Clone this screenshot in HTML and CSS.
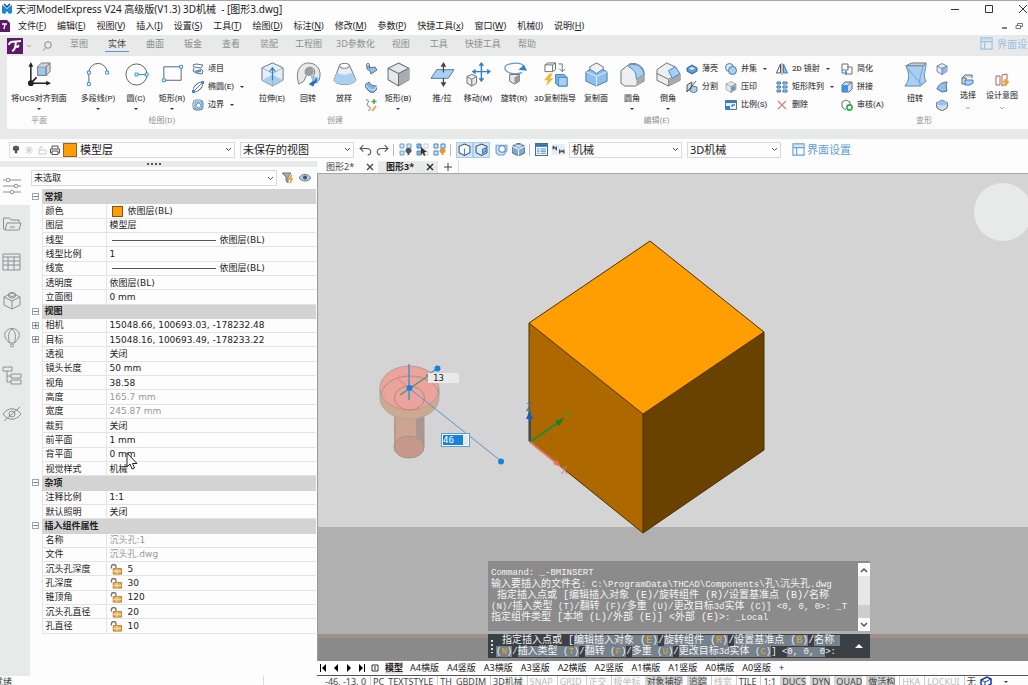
FILE: index.html
```html
<!DOCTYPE html>
<html lang="zh-CN">
<head>
<meta charset="utf-8">
<title>天河ModelExpress V24 - [图形3.dwg]</title>
<link rel="stylesheet" href="styles.css">
</head>
<body>
<svg class="defs" aria-hidden="true">
  <symbol id="cube" viewBox="0 0 24 24"><path d="M12 1 22 6v11l-10 6L2 17V6z" fill="#e6e8ea" stroke="#6b7076"/><path d="M12 11v12l10-6V6z" fill="#a9adb1"/><path d="M2 6l10 5 10-5M12 11v12" fill="none" stroke="#6b7076"/></symbol>
  <symbol id="bluecube" viewBox="0 0 24 24"><path d="M12 1 22 6v11l-10 6L2 17V6z" fill="#dcebf8" stroke="#5f6a75" stroke-width="1.5"/><path d="M12 11v12l10-6V6z" fill="#8fbce8"/><path d="M2 6l10 5 10-5M12 11v12" fill="none" stroke="#5f6a75" stroke-width="1.5"/></symbol>
  <symbol id="lock" viewBox="0 0 12 12"><path d="M1 5V3a2.500 2.500 0 0 1 5 0v2" fill="none" stroke="#777" stroke-width="1.500"/><path d="M3 5h9v6H3z" fill="#e8b25c" stroke="#b5772a"/><path d="M7 5v6M3 8h9" stroke="#fbe3b0"/></symbol>
  <symbol id="layout" viewBox="0 0 14 14"><path d="M1 1h12v12H1zM1 5h12M5 5v8" fill="none" stroke="currentColor" stroke-width="1.200"/><path d="M2 3h10" stroke="currentColor" stroke-dasharray="1 1"/></symbol>
  <symbol id="cross" viewBox="0 0 8 8"><path d="M1 1l6 6M7 1 1 7" fill="none" stroke="currentColor" stroke-width="1.300"/></symbol>
</svg>

<header class="titlebar">
  <svg class="app" viewBox="0 0 12 12"><path d="M1 2l3 2 2 2 2-2 3-2v8l-3 1-2-3-2 3-3-1z" fill="#1689d8"/><path d="M3 1l3 3 3-3" fill="none" stroke="#1b3f73" stroke-width="1.500"/></svg>
  <h1>天河ModelExpress V24 高级版(V1.3) 3D机械&nbsp; - [图形3.dwg]</h1>
  <div class="wincontrols">
    <button aria-label="最小化"><svg viewBox="0 0 10 10"><path d="M1 5.500h8" stroke="#333"/></svg></button>
    <button aria-label="最大化"><svg viewBox="0 0 10 10"><path d="M1.500 1.500h7v7h-7z" fill="none" stroke="#333"/></svg></button>
    <button aria-label="关闭"><svg viewBox="0 0 10 10"><path d="M1 1l8 8M9 1 1 9" stroke="#333"/></svg></button>
  </div>
</header>

<nav class="menubar">
  <svg class="doc" viewBox="0 0 10 12"><path d="M0 0h7l3 3v9H0z" fill="#5c1a66"/><path d="M2 4h5M5 4 4 9" stroke="#fff" stroke-width="1.300"/></svg>
  <button>文件(<u>F</u>)</button><button>编辑(<u>E</u>)</button><button>视图(<u>V</u>)</button><button>插入(<u>I</u>)</button><button>设置(<u>S</u>)</button><button>工具(<u>T</u>)</button><button>绘图(<u>D</u>)</button><button>标注(<u>N</u>)</button><button>修改(<u>M</u>)</button><button>参数(<u>P</u>)</button><button>快捷工具(<u>x</u>)</button><button>窗口(<u>W</u>)</button><button>机械(<u>J</u>)</button><button>说明(<u>H</u>)</button>
  <div class="mdi">
    <button aria-label="最小化文档"><svg viewBox="0 0 8 8"><path d="M2 6h5" stroke="#555" stroke-width="1.500"/></svg></button>
    <button aria-label="还原文档"><svg viewBox="0 0 8 8"><path d="M2.500 3V1.500h5v3H6M1 3.500h4.500v3H1z" fill="none" stroke="#777"/></svg></button>
  </div>
</nav>

<nav class="tabs">
  <button class="logo" aria-label="应用菜单"><svg viewBox="0 0 16 16"><path d="M0 0h16v16H0z" fill="#5c1a66"/><path d="M2 7C2 3 6 4 14 3M9 4C8 8 9 12 5 13M9 8c2 2 3 0 2-1" fill="none" stroke="#fff" stroke-width="2"/></svg></button>
  <svg class="tiny" viewBox="0 0 6 6"><path d="M1 2l2 2 2-2" fill="none" stroke="#aaa"/></svg>
  <button class="find" aria-label="搜索"><svg viewBox="0 0 10 10"><circle cx="6" cy="4" r="3.300" fill="none" stroke="#888"/><path d="M4 6.500 1 9.500" stroke="#888"/></svg></button>
  <div class="tablist">
    <button>草图</button><button class="on">实体</button><button>曲面</button><button>钣金</button><button>查看</button><button>装配</button><button class="wide">工程图</button><button class="wide">3D参数化</button><button>视图</button><button>工具</button><button class="wide">快捷工具</button><button>帮助</button>
  </div>
  <a class="uiset" href="#"><svg viewBox="0 0 14 14"><use href="#layout"/></svg>界面设置</a>
</nav>

<section class="ribbon">
  <div class="sheet">
    <div class="group">
      <div class="tools">
        <button class="big ucs"><svg viewBox="0 0 26 26"><path d="M4 22V4M4 22h17M4 22l6-6" stroke="#222" stroke-width="1.600"/><path d="M1.500 5 4 0l2.500 5zM20 19.500l5 2.500-5 2.500z" fill="#222"/><circle cx="4" cy="22" r="3" fill="#222"/><path d="M11 5h9v9h-9z" fill="#9cc7f0" stroke="#777"/><path d="M11 5l4-4h9l-4 4M24 1v9l-4 4V5z" fill="#cdd3d8" stroke="#777"/></svg><span>将UCS对齐到面</span><i></i></button>
      </div>
      <h2>平面</h2>
    </div>
    <div class="group draw">
      <div class="tools">
        <button class="big poly"><svg viewBox="0 0 26 26"><path d="M3 23V11a9.500 9.500 0 0 1 19 0" fill="none" stroke="#5b6168"/><path d="M1.500 9.500h3v3h-3zM20.500 9.500h3v3h-3zM1.500 21.500h3v3h-3z" fill="#fff" stroke="#2f8fe0"/></svg><span>多段线(P)</span><i></i></button>
        <button class="big"><svg viewBox="0 0 26 26"><circle cx="13" cy="13" r="11" fill="none" stroke="#5b6168"/><path d="M13 13h11" stroke="#2f8fe0"/><path d="M11.500 11.500h3v3h-3zM22 11.500h3v3h-3z" fill="#fff" stroke="#2f8fe0"/></svg><span>圆(C)</span><i></i></button>
        <button class="big"><svg viewBox="0 0 26 26"><path d="M4 5h18v14H4z" fill="none" stroke="#5b6168"/><path d="M20.500 3.500h3v3h-3zM2.500 17.500h3v3h-3z" fill="#fff" stroke="#2f8fe0"/></svg><span>矩形(R)</span><i></i></button>
        <div class="small">
          <button><svg viewBox="0 0 12 12"><path d="M1 2l3-1 7 1-2 3-7-1zM2 5l-1 3 3 2 6 1 1-3-2-2" fill="none" stroke="#6b7076"/><path d="M2 8l7-2v3l-5 1z" fill="#4a9be0"/></svg>项目</button>
          <button><svg viewBox="0 0 12 12"><ellipse cx="6" cy="6" rx="6" ry="3" transform="rotate(-45 6 6)" fill="none" stroke="#6b7076"/><path d="M2 10l8-8" stroke="#6b7076"/><path d="M0 9h3v3H0zM9 0h3v3H9z" fill="#2f8fe0"/></svg>椭圆(E)<i></i></button>
          <button><svg viewBox="0 0 12 12"><path d="M3 3h7v7H3z" fill="#fff" stroke="#2f8fe0"/><rect x="1" y="1" width="10" height="10" rx="3" fill="none" stroke="#7c858e"/><circle cx="6.500" cy="6.500" r="2.500" fill="#fff" stroke="#2f8fe0"/></svg>边界<i></i></button>
        </div>
      </div>
      <h2>绘图(D)</h2>
    </div>
    <div class="group">
      <div class="tools">
        <button class="big"><svg viewBox="0 0 26 26"><path d="M13 1l11 5v13l-11 6-11-6V6z" fill="#e3effa" stroke="#6b7076"/><path d="M2 19l11-6 11 6-11 6z" fill="#a9cdf0"/><path d="M2 6l11 6 11-6M13 12v13" fill="none" stroke="#9fb3c6"/><path d="M13 19V7m-3 3 3-4 3 4" fill="none" stroke="#2f7fd0" stroke-width="1.300"/></svg><span>拉伸(E)</span></button>
        <button class="big"><svg viewBox="0 0 26 26"><path d="M3 23C-2 8 6 1 13 1s15 6 11 18l-6 2v-7a5 5 0 1 0-7 0l-3 6z" fill="#e6e8ea" stroke="#777"/><circle cx="14" cy="10" r="4.500" fill="#9a9ea3"/><path d="M15 14l8 2v6h-5z" fill="#8fbfee"/><path d="M21 17c1 4-1 6-4 6m-3 0 4-3v5z" fill="#246fc0" stroke="#246fc0"/></svg><span>回转</span></button>
        <button class="big"><svg viewBox="0 0 26 26"><path d="M8 3 2 19c3 6 19 6 23 0L18 3z" fill="#e9eef2" stroke="#6b7076"/><path d="M5 11c5 3 11 3 16 0l4 8c-4 6-19 6-23 0z" fill="#a9cff2"/><ellipse cx="13" cy="4" rx="5" ry="2.500" fill="#fff" stroke="#6b7076"/></svg><span>放样</span></button>
        <div class="small icons">
          <button aria-label="扫掠"><svg viewBox="0 0 12 12"><path d="M2 1l3 2-1 2 6-1 2 3-6 4-1-3-3-2z" fill="#8fbfee" stroke="#5b6f84"/><circle cx="3" cy="2" r="1.500" fill="#fff" stroke="#5b6f84"/></svg></button>
          <button aria-label="加厚"><svg viewBox="0 0 12 12"><path d="M0 4l4-3c1 3 4 4 8 4v3l-4 4C4 11 1 8 0 4z" fill="#7fb4e8" stroke="#5b6f84"/><path d="M1 4c2 4 5 5 8 5l3-4" fill="none" stroke="#dcecfb"/></svg></button>
          <button aria-label="螺旋"><svg viewBox="0 0 12 12"><path d="M1 1c6 0-1 4 2 6 3 1 3 4 0 5" fill="none" stroke="#777"/><path d="M9 0v5M6.500 2.500h5" stroke="#3fae49" stroke-width="1.500"/><path d="M7 12l4-5" stroke="#eda64b" stroke-width="2"/></svg></button>
        </div>
        <button class="big"><svg viewBox="0 0 24 24"><use href="#cube"/></svg><span>矩形(B)</span><i></i></button>
      </div>
      <h2>创建</h2>
    </div>
    <div class="group">
      <div class="tools">
        <button class="big"><svg viewBox="0 0 26 26"><path d="M7 8h18l-6 9H1z" fill="#a9cff2" stroke="#4a7aa8"/><path d="M14 11V2M14 17v7" stroke="#444" stroke-width="1.300"/><path d="M11 5l3-5 3 5zM11 21l3 5 3-5z" fill="#444"/></svg><span>推/拉</span></button>
        <button class="big"><svg viewBox="0 0 26 26"><path d="M1 15l5-2 5 2v7l-5 3-5-3zM1 15l5 3 5-3M6 18v7" fill="#e6e8ea" stroke="#6b7076"/><path d="M16 2v17M8 10h16" stroke="#2f7fd0" stroke-width="1.500"/><path d="M13 4l3-4 3 4zM13 17l3 4 3-4zM22 7l4 3-4 3zM10 7l-4 3 4 3z" fill="#2f7fd0"/></svg><span>移动(M)</span></button>
        <button class="big"><svg viewBox="0 0 26 26"><path d="M21 11C12 14 3 11 3 6s17-7 20-1" fill="none" stroke="#5a9ada" stroke-width="1.300"/><path d="M17 8l6-5 3 6z" fill="#2f7fd0"/><path d="M8 13h10v7l-5 3-5-3z" fill="#e6e8ea" stroke="#6b7076"/><path d="M13 16v7l5-3v-7z" fill="#999"/></svg><span>旋转(R)</span></button>
        <button class="big guide"><svg viewBox="0 0 26 26"><path d="M2 3l3-2h8v7l-3 2H2zM2 3h8v7m0-7 3-2M16 2h4v8m-3-3 3 3 3-3" fill="none" stroke="#6b7076"/><path d="M7 12l-6 7h4l-2 6 8-8H7l3-5z" fill="#f6b52e"/><path d="M13 13h9l3 3v9h-9l-3-3z" fill="#7fb4e8" stroke="#3f86cc"/><path d="M16 16h9v9h-9z" fill="#a9cff2" stroke="#3f86cc"/></svg><span>3D复制指导</span></button>
        <button class="big"><svg viewBox="0 0 26 26"><path d="M6 5l7-4 7 4v9l-7 4-7-4z" fill="#eef1f3" stroke="#6b7076"/><path d="M2 10l5-2 6 4 6-4 5 2v10l-11 5-11-5z" fill="#8fbfee" stroke="#4a7aa8"/><path d="M2 10l11 5 11-5M13 15v10" fill="none" stroke="#e3f0fc"/></svg><span>复制面</span></button>
        <button class="big"><svg viewBox="0 0 26 26"><path d="M1 9l9-7c8-2 15 3 15 10v8l-9 5H5l-4-3z" fill="#eceef0" stroke="#6b7076"/><path d="M10 3c8-2 14 3 15 10l-8 5c0-7-2-10-8-13z" fill="#a9cff2" stroke="#3f86cc"/><path d="M17 18v7l8-5v-7z" fill="#aaa"/></svg><span>圆角</span><i></i></button>
        <button class="big"><svg viewBox="0 0 26 26"><path d="M1 8l10-7 9 4 5 8v6l-12 6-12-6z" fill="#eceef0" stroke="#6b7076"/><path d="M1 12l12 6v7M13 18l12-6" fill="none" stroke="#6b7076"/><path d="M13 18l12-6v7l-12 6z" fill="#aaa"/><path d="M13 9l7-4 5 7-8 5z" fill="#a9cff2" stroke="#3f86cc"/></svg><span>倒角</span><i></i></button>
        <div class="small col-a">
          <button><svg viewBox="0 0 12 12"><path d="M1 5l5-3 5 3v3l-5 3-5-3z" fill="#5a9ee0" stroke="#2d5f94"/><path d="M3 5.500 6 4l3 1.500L6 7z" fill="#dcecfb"/></svg>薄壳</button>
          <button><svg viewBox="0 0 12 12"><path d="M1 4l5-3-1 6-4 4z" fill="#d5dce2" stroke="#555"/><path d="M6 5l5 1v4l-3 2-4-2z" fill="#a9cff2" stroke="#4a7aa8"/><path d="M1 11 10 0" stroke="#555"/></svg>分割</button>
        </div>
        <div class="small col-b">
          <button><svg viewBox="0 0 12 12"><circle cx="4.500" cy="4.500" r="4" fill="#d7e8f8" stroke="#4a7aa8"/><circle cx="7.500" cy="7.500" r="4" fill="#a9cff2" stroke="#4a7aa8"/></svg>并集<i></i></button>
          <button><svg viewBox="0 0 24 24"><use href="#cube"/><path d="M14 13l6-3v6l-6 3z" fill="#4a9be0"/></svg>压印</button>
          <button><svg viewBox="0 0 12 12"><path d="M.5 1.500h11v9H.5z" fill="#eaf3fc" stroke="#4a7aa8"/><path d="M1 2h10v2H1zM1 7h4v3H1z" fill="#2f7fd0"/><path d="M7 8V6h3" fill="none" stroke="#444"/></svg>比例(S)</button>
        </div>
        <div class="small col-c">
          <button><svg viewBox="0 0 12 12"><path d="M4.500 1v9H.5z" fill="#fff" stroke="#555"/><path d="M7.500 1v9h4z" fill="#8fbfee" stroke="#4a7aa8"/><path d="M6 0v12" stroke="#888"/></svg>2D 镜射<i></i></button>
          <button><svg viewBox="0 0 12 12"><path d="M1 1h3.500v2H1zM7 1h4v2H7zM1 5h3.500v2H1zM7 5h4v2H7zM1 9h3.500v2H1zM7 9h4v2H7z" fill="#a9cff2" stroke="#3f76ad"/></svg>矩形阵列<i></i></button>
          <button><svg viewBox="0 0 12 12"><path d="M2 2l8 8M10 2l-8 8" stroke="#d88078" stroke-width="1.200"/></svg>删除</button>
        </div>
        <div class="small col-d">
          <button><svg viewBox="0 0 12 12"><path d="M1 1h6v6H1zM6 4h5v7H5V8" fill="none" stroke="#6b7076"/><path d="M1 7v3h5m-2-2 2 2-2 2" fill="none" stroke="#2f7fd0"/></svg>简化</button>
          <button><svg viewBox="0 0 12 12"><path d="M1 4l3-3h7v7l-3 3H1z" fill="#d5dce2" stroke="#5b6f84"/><path d="M1 4h6v7H1z" fill="#3f94e4"/><path d="M7 4l4-3" stroke="#5b6f84"/></svg>拼接</button>
          <button><svg viewBox="0 0 12 12"><path d="M5 1l4 2v3M1 3l4-2M1 3v5l4 3" fill="none" stroke="#6b7076"/><circle cx="8.500" cy="8.500" r="2.600" fill="none" stroke="#2fae3e" stroke-width="1.600"/></svg>审核(A)</button>
        </div>
      </div>
      <h2>编辑(E)</h2>
    </div>
    <div class="group tight">
      <div class="tools">
        <button class="big"><svg viewBox="0 0 26 26"><path d="M3 4l6-3h15l-3 3z" fill="#ccc" stroke="#777"/><path d="M3 4h18l3-3c0 9-4 12 0 19l-6 5H2c6-8 4-14 1-21z" fill="#a9cff2" stroke="#5d87b0"/><path d="M21 4c-2 9-5 14-3 21M4 6l15 17" fill="none" stroke="#6f9fd0"/></svg><span>扭转</span></button>
        <div class="small icons">
          <button aria-label="变形一"><svg viewBox="0 0 24 24"><use href="#bluecube"/></svg></button>
          <button aria-label="变形二"><svg viewBox="0 0 12 12"><path d="M1 8C2 4 6 1 11 1c-1 3-1 6 0 9l-5 1z" fill="#8fbfee" stroke="#5b6f84"/></svg></button>
          <button aria-label="变形三"><svg viewBox="0 0 12 12"><path d="M0 4l6-3 6 3-1 5-5 3-5-3z" fill="#d5dce2" stroke="#5b6f84"/><ellipse cx="6" cy="4" rx="5" ry="2.500" fill="#8fc4f5"/></svg></button>
        </div>
      </div>
      <h2>变形</h2>
    </div>
    <div class="group tight tall">
      <div class="tools">
        <button class="mid"><svg viewBox="0 0 14 14"><path d="M1 5l3-3h7v3M1 5h4v6H1z" fill="#d5dce2" stroke="#666"/><path d="M4 7h8v3l-3 2H4z" fill="#a9cff2" stroke="#2f7fd0"/></svg><span>选择</span><svg class="chev" viewBox="0 0 6 6"><path d="M1 2l2 2 2-2" fill="none" stroke="#aaa"/></svg></button>
        <button class="mid"><svg viewBox="0 0 14 14"><path d="M1 3h4v9H1zM7 2l5-1v9l-5 3z" fill="#fff" stroke="#b0625a"/><path d="M11 6l-2 3h4l-3 4" fill="none" stroke="#f29b1d" stroke-width="1.500"/></svg><span>设计意图</span><svg class="chev" viewBox="0 0 6 6"><path d="M1 2l2 2 2-2" fill="none" stroke="#aaa"/></svg></button>
      </div>
    </div>
  </div>
</section>

<section class="toolbar">
  <label class="combo layer">
    <svg viewBox="0 0 10 12"><path d="M5 1a3 3 0 0 1 1.500 6v3h-3V7A3 3 0 0 1 5 1z" fill="#555"/></svg>
    <svg viewBox="0 0 10 10"><path d="M5 1v8M1 5h8M2 2l6 6M8 2 2 8" stroke="#ccc"/></svg>
    <svg viewBox="0 0 10 10"><path d="M2 5h7v4H2zM3 5V2h3" fill="none" stroke="#ccc"/></svg>
    <svg viewBox="0 0 10 10"><path d="M2 4V1h6v3M2 8H.5V4h9v4H8M2 6h6v3.500H2z" fill="none" stroke="#555"/></svg>
    <b class="swatch"></b>
    <select aria-label="图层"><option>模型层</option></select>
  </label>
  <select class="combo view" aria-label="视图"><option>未保存的视图</option></select>
  <button aria-label="撤销"><svg viewBox="0 0 12 12"><path d="M4 2 1 5l3 3M1 5h6c5 0 5 6 1 6" fill="none" stroke="#555"/></svg></button>
  <button aria-label="重做"><svg viewBox="0 0 12 12"><path d="M8 2l3 3-3 3M11 5H5C0 5 0 11 4 11" fill="none" stroke="#555"/></svg></button>
  <hr>
  <button aria-label="隔离"><svg viewBox="0 0 13 13"><path d="M1 1h4v4H1zM8 1h4v4H8zM1 8h4v4H1z" fill="#cfe4f8" stroke="#6f9fd0"/><path d="M9.500 5a2.500 2.500 0 0 1 1 5v2h-2v-2a2.500 2.500 0 0 1 1-5z" fill="#555"/></svg></button>
  <button aria-label="选择隐藏"><svg viewBox="0 0 13 13"><path d="M1 1h4v4H1zM1 8h4v4H1z" fill="#7fb4e8" stroke="#4a86c8"/><path d="M8 1h4v4H8zM8 8h4v4H8z" fill="#fff" stroke="#ccc"/><path d="M5 4l6 5-3 .5L9.500 12 8 13l-1.500-3L5 12z" fill="#333"/></svg></button>
  <button aria-label="显示全部"><svg viewBox="0 0 13 13"><path d="M1 1h4v4H1zM8 1h4v4H8zM1 8h4v4H1z" fill="#cfe4f8" stroke="#3f86cc"/><path d="M9.500 5a2.500 2.500 0 0 1 1 5v2h-2v-2a2.500 2.500 0 0 1 1-5z" fill="#e8963a"/></svg></button>
  <hr>
  <button class="set" aria-label="线框"><svg viewBox="0 0 12 12"><path d="M6 1l5 2v6l-5 2.500L1 9V3z" fill="#f5f8fb" stroke="#555"/><path d="M6 5v6" stroke="#2f8fe0"/></svg></button>
  <button class="set" aria-label="消隐"><svg viewBox="0 0 12 12"><path d="M6 1l5 2v6l-5 2.500L1 9V3z" fill="#dcebf8" stroke="#555"/><path d="M7 6l3-1.500v3L7 9.500z" fill="#8fc4f5" stroke="#2f7fd0"/></svg></button>
  <button aria-label="圆角显示"><svg viewBox="0 0 12 12"><path d="M1 2h10v5l-3 4H3L1 9z" fill="#cfe4f8" stroke="#6f9fd0"/><circle cx="6.500" cy="5.500" r="3" fill="#fff" stroke="#4a86c8"/></svg></button>
  <button aria-label="着色"><svg viewBox="0 0 12 12"><path d="M6 0l6 3v6l-6 3-6-3V3z" fill="#7fa9cf" stroke="#4f7397"/><path d="M0 3l6 3 6-3M6 6v6M3 1.500l6 3M9 1.500l-6 3" fill="none" stroke="#e7f1fa"/></svg></button>
  <hr>
  <button aria-label="特性表"><svg viewBox="0 0 12 12"><path d="M.5.500h11v11H.5z" fill="#fff" stroke="#3c6fa8"/><path d="M1 1h10v2.500H1z" fill="#2f6fb8"/><path d="M2 5.500h2m1 0h5M2 7.500h2m1 0h5M2 9.500h2m1 0h5" stroke="#4a86c8"/></svg></button>
  <button aria-label="对比"><svg viewBox="0 0 12 12"><path d="M0 1h12v10H0z" fill="#e2eef8"/><path d="M1 3v3m0-3 3 3V3M7 6v3l2-2 2 2V6" fill="none" stroke="#444"/></svg></button>
  <select class="combo mech" aria-label="工作空间"><option>机械</option></select>
  <select class="combo mech3" aria-label="界面"><option>3D机械</option></select>
  <a class="uilink" href="#"><svg viewBox="0 0 14 14"><use href="#layout"/></svg>界面设置</a>
</section>

<main class="workspace">
  <aside class="side">
    <div class="grip"></div>
    <div class="sidebody">
      <nav class="rail">
        <button class="on" aria-label="特性"><svg viewBox="0 0 20 20"><path d="M1 4h3m4 0h11M1 10h11m4 0h3M1 16h7m4 0h7"/><circle cx="6" cy="4" r="1.800"/><circle cx="14" cy="10" r="1.800"/><circle cx="10" cy="16" r="1.800"/></svg></button>
        <button aria-label="文件夹"><svg viewBox="0 0 20 20"><path d="M3 16 1.500 15V4h6l1.500 2h8v3M3 16 5 9h14l-2 7zM8 13h5"/></svg></button>
        <button aria-label="表格"><svg viewBox="0 0 20 20"><path d="M1 2h17v16H1zM1 5h17M1 9h17M1 13h17M6 5v13M12 5v13"/></svg></button>
        <button aria-label="组件"><svg viewBox="0 0 20 20"><path d="M10 3l8 4v8l-8 4-8-4V7zM2 7l8 4 8-4M10 11v8"/><ellipse cx="10" cy="4.500" rx="3.500" ry="2"/><path d="M6.500 4.500v2c1 2 6 2 7 0v-2"/></svg></button>
        <button aria-label="渲染"><svg viewBox="0 0 20 20"><path d="M7.500 15C4 11 2 9 3 5c2-6 12-6 14 0 1 4-1 6-4.500 10zM7.500 15C6 9 6 4 10 1c4 3 4 8 2.500 14"/><circle cx="10" cy="17.500" r="1.500"/></svg></button>
        <button aria-label="结构"><svg viewBox="0 0 20 20"><path d="M1 1h9v4H1zM9 8h10v4H9zM9 14h10v4H9zM5 5v11h4M5 10h4"/></svg></button>
        <button aria-label="隐藏"><svg viewBox="0 0 20 20"><path d="M1 10c5-7 13-7 18 0-5 7-13 7-18 0zM2 17 18 3"/><circle cx="10" cy="10" r="3"/></svg></button>
      </nav>
      <section class="props">
        <div class="pick">
          <select class="combo" aria-label="选择集"><option>未选取</option></select>
          <button aria-label="快速选择"><svg viewBox="0 0 12 12"><path d="M0 1h9L6 5v6l-2-2V5z" fill="#aaa" stroke="#777"/><path d="M10 3 7 7h3l-2 4" fill="none" stroke="#f29b1d" stroke-width="1.500"/></svg></button>
          <button aria-label="可见性"><svg viewBox="0 0 12 12"><path d="M0 6c3-5 9-5 12 0-3 4-9 4-12 0z" fill="#b8c6d3" stroke="#6c8198"/><circle cx="6" cy="5.500" r="2" fill="#2b5a8a"/></svg></button>
        </div>
        <table>
          <colgroup><col class="c-fold"><col class="c-name"><col></colgroup>
          <tr class="head"><td><button aria-label="折叠">−</button></td><th colspan="2">常规</th></tr>
          <tr><td></td><th>颜色</th><td><b class="dot"></b>依图层(BL)</td></tr>
          <tr><td></td><th>图层</th><td>模型层</td></tr>
          <tr><td></td><th>线型</th><td><b class="rule"></b>依图层(BL)</td></tr>
          <tr><td></td><th>线型比例</th><td>1</td></tr>
          <tr><td></td><th>线宽</th><td><b class="rule"></b>依图层(BL)</td></tr>
          <tr><td></td><th>透明度</th><td>依图层(BL)</td></tr>
          <tr><td></td><th>立面图</th><td>0 mm</td></tr>
          <tr class="head"><td><button aria-label="折叠">−</button></td><th colspan="2">视图</th></tr>
          <tr><td><button aria-label="展开">+</button></td><th>相机</th><td>15048.66, 100693.03, -178232.48</td></tr>
          <tr><td><button aria-label="展开">+</button></td><th>目标</th><td>15048.16, 100693.49, -178233.22</td></tr>
          <tr><td></td><th>透视</th><td>关闭</td></tr>
          <tr><td></td><th>镜头长度</th><td>50 mm</td></tr>
          <tr><td></td><th>视角</th><td>38.58</td></tr>
          <tr class="ro"><td></td><th>高度</th><td>165.7 mm</td></tr>
          <tr class="ro"><td></td><th>宽度</th><td>245.87 mm</td></tr>
          <tr><td></td><th>裁剪</th><td>关闭</td></tr>
          <tr><td></td><th>前平面</th><td>1 mm</td></tr>
          <tr><td></td><th>背平面</th><td>0 mm</td></tr>
          <tr><td></td><th>视觉样式</th><td>机械</td></tr>
          <tr class="head"><td><button aria-label="折叠">−</button></td><th colspan="2">杂项</th></tr>
          <tr><td></td><th>注释比例</th><td>1:1</td></tr>
          <tr><td></td><th>默认照明</th><td>关闭</td></tr>
          <tr class="head"><td><button aria-label="折叠">−</button></td><th colspan="2">插入组件属性</th></tr>
          <tr class="ro"><td></td><th>名称</th><td>沉头孔:1</td></tr>
          <tr class="ro"><td></td><th>文件</th><td>沉头孔.dwg</td></tr>
          <tr><td></td><th>沉头孔深度</th><td><svg class="lock"><use href="#lock"/></svg>5</td></tr>
          <tr><td></td><th>孔深度</th><td><svg class="lock"><use href="#lock"/></svg>30</td></tr>
          <tr><td></td><th>锥顶角</th><td><svg class="lock"><use href="#lock"/></svg>120</td></tr>
          <tr><td></td><th>沉头孔直径</th><td><svg class="lock"><use href="#lock"/></svg>20</td></tr>
          <tr><td></td><th>孔直径</th><td><svg class="lock"><use href="#lock"/></svg>10</td></tr>
        </table>
        <svg class="cursor" viewBox="0 0 12 18"><path d="M1 1v14l3-3 2 5 2.500-1-2-4.500H11z" fill="#fff" stroke="#222"/></svg>
      </section>
    </div>
  </aside>

  <section class="editor">
    <nav class="doctabs">
      <div class="doctab"><button>图形2*</button><button aria-label="关闭图形2"><svg viewBox="0 0 8 8"><use href="#cross"/></svg></button></div>
      <div class="doctab on"><button>图形3*</button><button aria-label="关闭图形3"><svg viewBox="0 0 8 8"><use href="#cross"/></svg></button></div>
      <button class="add" aria-label="新建图形"><svg viewBox="0 0 8 8"><path d="M4 0v8M0 4h8" stroke="#444"/></svg></button>
    </nav>
    <div class="canvas">
      <svg class="scene" viewBox="318 174 710 487" preserveAspectRatio="xMinYMin slice">
        <path d="M318 174h710v353H318z" fill="#d4d4d4"/>
        <path d="M318 527h710v107H318z" fill="#b0b0b0"/>
        <path d="M318 634h710v4H318z" fill="#a08f8b"/>
        <path d="M318 638h710v23H318z" fill="#8a8a8a"/>
        <circle cx="1003" cy="212" r="29" fill="#e8eae9"/>
        <path d="M650 241l114 91-121 82-114-91z" fill="#ff9e00"/>
        <path d="M529 323l114 91v119l-114-92z" fill="#ad6900"/>
        <path d="M764 332v118l-121 83V414z" fill="#694200"/>
        <path d="M650 241l114 91v118l-121 83-114-92V323zM529 323l114 91 121-82M643 414v119" fill="none" stroke="#4d3000"/>
        <path d="M394 410v37a15 11 0 0 0 30 0v-37z" fill="#cda48f"/>
        <path d="M416 415l8-5v37c0 5-3 8-8 10z" fill="#a99694"/>
        <ellipse cx="409" cy="447" rx="15" ry="11" fill="#c7978c" stroke="#998"/>
        <path d="M380 388v10a29.500 21 0 0 0 59 0v-10z" fill="#cfa890" stroke="#aaa"/>
        <ellipse cx="409.500" cy="388" rx="29.500" ry="22" fill="#eba49c" stroke="#b89b94"/>
        <path d="M381 394c6-24 52-24 58 0M395 417v30M424 417v30" fill="none" stroke="#a9908a"/>
        <ellipse cx="409.500" cy="398" rx="15" ry="12" fill="none" stroke="#b9857e"/>
        <path d="M400 395l28-19" stroke="#4c9a74" stroke-width="1.500"/>
        <path d="M398 379l11 9" stroke="#cf8780"/>
        <path d="M409 364v36M426 376l12-8" stroke="#4a90d0" stroke-width="1.500"/>
        <path d="M409 388l92 73" stroke="#5b93cc"/>
        <circle cx="409.500" cy="388" r="3" fill="#1783d8"/><circle cx="437.500" cy="368.500" r="3" fill="#1783d8"/><circle cx="501" cy="461.500" r="3" fill="#1783d8"/>
        <path d="M530 442v-30" stroke="#3a4a60" stroke-width="2"/><path d="M526 419l3.500-8 3.500 8z" fill="#0e5fc0"/>
        <path d="M530 442l29-20" stroke="#1f8a3a" stroke-width="2"/><path d="M555 421l9-3-5 8z" fill="#13802e"/>
        <path d="M530 442l25 20" stroke="#e0766a" stroke-width="2"/><path d="M553 464l8 3-4-7z" fill="#ea6f66"/>
        <text x="526" y="411" fill="#3b78c4">Z</text><text x="565" y="419" fill="#3f9a30">Y</text><text x="561" y="474" fill="#d8897c">X</text>
      </svg>
      <output class="dist">13</output>
      <input class="dyn" aria-label="动态输入" value="46">
      <div class="cmd">
        <div class="history">
          <div class="log">
            <p class="s">Command: _-BMINSERT</p>
            <p>输入要插入的文件名<span class="s">: C:\ProgramData\THCAD\Components\</span>孔<span class="s">\</span>沉头孔<span class="s">.dwg</span></p>
            <p> 指定插入点或 [编辑插入对象 (E)/旋转组件 (R)/设置基准点 (B)/名称</p>
            <p><span class="s">(N)/</span>插入类型<span class="s"> (T)/</span>翻转<span class="s"> (F)/</span>多重<span class="s"> (U)/</span>更改目标<span class="s">3d</span>实体<span class="s"> (C)] &lt;0, 0, 0&gt;: _T</span></p>
            <p>指定组件类型 [本地 (L)/外部 (E)] &lt;外部 (E)&gt;<span class="s">: _Local</span></p>
          </div>
          <div class="scroll"><button aria-label="向上"><svg viewBox="0 0 8 8"><path d="M1 6l3-3 3 3" fill="none" stroke="#555" stroke-width="1.500"/></svg></button><b></b><button aria-label="向下"><svg viewBox="0 0 8 8"><path d="M1 2l3 3 3-3" fill="none" stroke="#555" stroke-width="1.500"/></svg></button></div>
        </div>
        <div class="prompt">
          <b class="dots"></b>
          <div class="log">
            <p> 指定插入点或 [<mark>编辑插入对象 (<em>E</em>)</mark>/<mark>旋转组件 (<em>R</em>)</mark>/<mark>设置基准点 (<em>B</em>)</mark>/<mark>名称 </mark></p>
            <p><mark><span class="s">(<em>N</em>)</span></mark><span class="s">/</span><mark>插入类型<span class="s"> (<em>T</em>)</span></mark><span class="s">/</span><mark>翻转<span class="s"> (<em>F</em>)</span></mark><span class="s">/</span><mark>多重<span class="s"> (<em>U</em>)</span></mark><span class="s">/</span><mark>更改目标<span class="s">3d</span>实体<span class="s"> (<em>C</em>)</span></mark><span class="s">] &lt;<mark>0, 0, 0</mark>&gt;:</span></p>
          </div>
          <button aria-label="展开命令"><svg viewBox="0 0 8 8"><path d="M0 6l4-4 4 4z" fill="#fff"/></svg></button>
        </div>
      </div>
    </div>
    <nav class="sheets">
      <div class="step">
        <button aria-label="第一个"><svg viewBox="0 0 8 8"><path d="M1 0h1v8H1zM7 0v8L3 4z"/></svg></button>
        <button aria-label="上一个"><svg viewBox="0 0 8 8"><path d="M6 0v8L2 4z"/></svg></button>
        <button aria-label="下一个"><svg viewBox="0 0 8 8"><path d="M2 0v8l4-4z"/></svg></button>
        <button aria-label="最后一个"><svg viewBox="0 0 8 8"><path d="M6 0h1v8H6zM1 0v8l4-4z"/></svg></button>
        <button aria-label="列表"><svg viewBox="0 0 8 8"><path d="M1 1h6v6H1zM3 3h2M3 5h2" fill="none" stroke="#333"/></svg></button>
      </div>
      <button class="on">模型</button><button>A4横版</button><button>A4竖版</button><button>A3横版</button><button>A3竖版</button><button>A2横版</button><button>A2竖版</button><button>A1横版</button><button>A1竖版</button><button>A0横版</button><button>A0竖版</button><button>+</button>
    </nav>
  </section>
</main>

<footer class="status">
  <div class="ready"><span>就绪</span></div>
  <div class="cells">
    <span class="xyz">-46, -13, 0</span><span>PC_TEXTSTYLE</span><span>TH_GBDIM</span><span>3D机械</span><span class="off">SNAP</span><span class="off">GRID</span><span class="off">正交</span><span class="off">极坐标</span><span class="hot">对象捕捉</span><span class="hot">追踪</span><span class="off">线宽</span><span>TILE</span><span>1:1</span><span class="hot">DUCS</span><span class="hot">DYN</span><span class="hot">QUAD</span><span class="hot">做活构</span><span class="off">HKA</span><span class="off">LOCKUI</span><span>无</span>
    <svg viewBox="0 0 12 12"><path d="M1 4l6-3 4 2v5l-6 3-4-2z" fill="#fff" stroke="#123a9a" stroke-width="1.500"/><path d="M1 4l4 2 6-3M5 6v5" stroke="#123a9a" fill="none"/></svg>
    <i></i>
  </div>
</footer>
</body>
</html>
```
FILE: styles.css
```css
* { box-sizing: border-box; }
body {
  margin: 0;
  height: 100vh;
  overflow: hidden;
  display: flex;
  flex-direction: column;
  background: #fdfdfd;
  border-top: 1px solid #a8a8a8;
  color: #222;
  font: 9px/12px "Noto Sans", "Noto Sans CJK SC", sans-serif;
}
h1, h2, p { margin: 0; font-size: inherit; font-weight: 400; }
button, select, input {
  font: inherit;
  color: inherit;
  background: none;
  border: 0;
  border-radius: 0;
  padding: 0;
  margin: 0;
  white-space: nowrap;
}
button { display: flex; align-items: center; justify-content: center; flex: none; }
svg { display: block; flex: none; }
a { text-decoration: none; }
u { text-underline-offset: 1px; }
.defs { position: absolute; width: 0; height: 0; }

/* Title and menus */
.titlebar { display: flex; align-items: center; flex: none; height: 15px; }
.titlebar .app { width: 12px; height: 12px; margin: 0 3px 0 1px; }
.titlebar h1 { font-size: 10px; white-space: nowrap; }
.wincontrols { display: flex; gap: 24px; margin-left: auto; overflow: hidden; padding-left: 8px; }
.wincontrols svg { width: 10px; height: 10px; }
.menubar { display: flex; align-items: center; flex: none; gap: 11px; height: 19px; padding-top: 1px; }
.menubar .doc { width: 10px; height: 12px; margin-right: -3px; }
.mdi { display: flex; gap: 7px; margin-left: auto; padding-right: 5px; }
.mdi svg { width: 8px; height: 8px; }

.tabs { display: flex; align-items: center; flex: none; height: 21px; background: #e8eae9; padding-left: 7px; color: #8b8f90; }
.logo svg { width: 16px; height: 16px; }
.tiny { width: 6px; height: 6px; margin: 0 10px 0 3px; }
.find svg { width: 10px; height: 10px; }
.tablist { display: flex; gap: 20px; height: 17px; margin: 0 0 4px 18px; }
.tablist button { position: relative; }
.tablist .wide { margin: 0 -3px; }
.tablist .on { color: #444; }
.tablist .on::after { content: ""; position: absolute; left: -3px; right: -3px; bottom: 0; height: 1px; background: #5a97d8; }
.uiset { display: flex; align-items: center; gap: 4px; width: 48px; margin: 0 0 4px auto; overflow: hidden; white-space: nowrap; font-size: 10px; color: #98bfe8; }
.uiset svg, .uilink svg { width: 13px; height: 13px; }

/* Ribbon */
.ribbon { flex: none; background: #e8eae9; padding: 0 0 10px 7px; }
.sheet { display: flex; height: 73px; background: #fdfdfd; border-radius: 3px 0 0 3px; padding-left: 1px; font: 500 8px/10px Roboto, "Noto Sans CJK SC", sans-serif; color: #484b4e; overflow: hidden; }
.group { display: flex; flex-direction: column; flex: none; margin-right: 8px; }
.group.tight { margin-right: 0; }
.group h2 { text-align: center; color: #8d9194; font-weight: 400; margin-top: 1px; }
.group.draw { width: 168px; }
.tools { display: flex; height: 59px; }
.big { width: 36px; flex-direction: column; justify-content: flex-start; padding-top: 6px; }
.big svg { width: 25px; height: 25px; margin-bottom: 7px; }
.big.ucs { width: 62px; }
.big.poly { width: 40px; }
.big.guide { width: 46px; }
.big i { margin-top: 4px; }
i { border: 2px solid transparent; border-top-color: #333; border-bottom: 0; }
.small { display: flex; flex-direction: column; padding-top: 4px; width: 56px; }
.small button { height: 18px; gap: 4px; justify-content: flex-start; }
.small svg { width: 12px; height: 12px; }
.small i { margin-left: 2px; }
.small.icons { width: 18px; }
.small.icons button { justify-content: center; }
.draw .small { padding-left: 2px; }
.small.col-a { width: 39px; }
.small.col-b { width: 51px; }
.small.col-c { width: 65px; }
.small.col-d { width: 48px; }
.mid { width: 34px; flex-direction: column; justify-content: flex-start; padding-top: 17px; }
.mid svg { width: 14px; height: 14px; margin-bottom: 4px; }
.mid .chev { width: 6px; height: 6px; margin-top: 4px; }

/* Toolbar */
.toolbar { display: flex; align-items: center; flex: none; height: 22px; padding: 0 0 1px 9px; gap: 5px; font-size: 11px; }
.combo { height: 16px; border: 1px solid #dadada; }
select {
  appearance: none;
  padding: 0 2px;
  background: url("data:image/svg+xml,%3Csvg xmlns='http://www.w3.org/2000/svg' width='7' height='5'%3E%3Cpath d='M1 1l2.500 2.500L6 1' fill='none' stroke='%23555'/%3E%3C/svg%3E") no-repeat right 2px center;
}
.layer { display: flex; align-items: center; gap: 3px; width: 226px; padding-left: 1px; }
.layer svg { width: 10px; height: 10px; }
.layer select { flex: 1; height: 14px; padding: 0; }
.swatch { width: 14px; height: 14px; background: #ff9e00; border: 1px solid #8a6a30; }
.view { width: 114px; }
.toolbar button { width: 12px; height: 16px; }
.toolbar button svg { width: 13px; height: 13px; }
.toolbar .set { width: 17px; background: #cfe6fa; border: 1px solid #a3cdf2; }
.toolbar .set + .set { margin-left: -5px; }
.toolbar hr { width: 1px; height: 12px; margin: 0; border: 0; background: #bbb; }
.mech { width: 113px; }
.mech3 { width: 94px; }
.uilink { display: flex; align-items: center; gap: 2px; color: #5f9fda; margin-left: 6px; white-space: nowrap; }

/* Workspace */
.workspace { display: flex; flex: 1; min-height: 0; }
.side { display: flex; flex-direction: column; width: 317px; flex: none; }
.grip { height: 6px; flex: none; background: #e8eae9; display: flex; justify-content: center; align-items: center; padding-right: 9px; }
.grip::after { content: ""; width: 14px; height: 0; border-top: 2px dotted #555; }
.sidebody { display: flex; flex: 1; min-height: 0; }
.rail { width: 30px; background: #e8eae9; flex: none; }
.rail button { width: 30px; height: 38px; padding-right: 7px; }
.rail .on { background: #fdfdfd; }
.rail svg { width: 20px; height: 20px; fill: none; stroke: #8c9092; stroke-width: 1; }
.props { flex: 1; position: relative; font-family: "DejaVu Sans", "Noto Sans CJK SC", sans-serif; padding-right: 1px; }
.pick { display: flex; align-items: center; gap: 5px; padding: 3px 5px 3px 1px; }
.pick .combo { flex: 1; }
.pick button svg { width: 12px; height: 12px; }
table { width: 100%; height: 445px; border-collapse: collapse; table-layout: fixed; line-height: 12px; }
.c-fold { width: 12px; }
.c-name { width: 64px; }
td, th { padding: 0 0 0 3px; border: 1px solid #e4e4e4; border-right: 0; text-align: left; font-weight: 400; white-space: nowrap; overflow: hidden; }
td:first-child { border: 0; padding: 0 0 0 2px; }
.head th { font-weight: 700; background: #d3d3d3; border-color: #d3d3d3; padding-left: 2px; }
td button { width: 7px; height: 7px; border: 1px solid #9aa5b0; font: 8px/5px "DejaVu Sans", sans-serif; color: #4a5a6a; }
.ro td { color: #999; }
.dot { display: inline-block; width: 11px; height: 11px; margin: 0 5px 0 2px; vertical-align: middle; background: #ff9e00; border: 1px solid #7a5a20; }
.rule { display: inline-block; width: 104px; height: 1px; margin: 0 4px 0 2px; vertical-align: middle; background: #555; }
.lock { display: inline-block; width: 12px; height: 11px; margin-right: 6px; vertical-align: middle; }
.cursor { position: absolute; left: 96px; top: 285px; width: 12px; height: 18px; }

.editor { display: flex; flex-direction: column; flex: 1; min-width: 0; }
.doctabs { display: flex; height: 13px; flex: none; border-bottom: 1px solid #a5a8a8; }
.doctab { display: flex; align-items: center; gap: 12px; padding: 0 4px 0 9px; color: #444; }
.doctab.on { background: #e8eae9; font-weight: 700; padding-left: 8px; color: #222; }
.doctab svg { width: 8px; height: 8px; }
.add { width: 21px; border-right: 1px solid #ddd; }
.add svg { width: 8px; height: 8px; }
.canvas { position: relative; flex: 1; min-height: 0; overflow: hidden; border-left: 1px solid #999; background: #8a8a8a; }
.scene { position: absolute; inset: 0; width: 100%; height: 100%; }
.scene text { font: 10px "Liberation Sans", sans-serif; }
.dist, .dyn { position: absolute; font: 9px/10px "DejaVu Sans Mono", monospace; }
.dist { left: 110px; top: 199px; width: 31px; height: 10px; padding-left: 5px; background: #e8eae9; }
.dyn { left: 123px; top: 259px; width: 29px; height: 14px; padding-left: 1px; color: #fff; border: 1px solid #5aa0e0; background: linear-gradient(90deg, #1783d8 21px, #e8e8e8 21px); box-shadow: inset 0 0 0 1px #fff; }
.cmd { position: absolute; left: 170px; bottom: 3px; width: 382px; display: flex; flex-direction: column; gap: 3px; color: #f4f4f4; font: 10px/11px "Liberation Mono", "Noto Sans CJK SC", monospace; }
.log { flex: 1; }
.log p { white-space: pre; height: 11px; }
.s { font-size: 9px; }
.history { display: flex; background: #8b8b8b; height: 70px; }
.history .log { padding: 7px 0 0 3px; }
.scroll { display: flex; flex-direction: column; width: 12px; background: #e6e8e8; margin-top: 2px; }
.scroll button { height: 13px; background: #fbfbfb; }
.scroll b { height: 13px; margin-top: auto; background: #cdcdcd; }
.scroll svg, .prompt svg { width: 8px; height: 8px; }
.prompt { display: flex; height: 24px; background: #3a4043; }
.prompt .log { padding-top: 1px; }
.dots { width: 8px; margin: 5px 0; background: radial-gradient(circle, #ddd 1px, transparent 1px) 0 0 / 8px 4px; }
.prompt button { width: 22px; }
mark { color: inherit; background: #75818b; }
em { font-style: normal; color: #e0aa2c; }

.sheets { display: flex; align-items: center; gap: 8px; flex: none; height: 15px; border-bottom: 1px solid #555; white-space: nowrap; }
.step { display: flex; gap: 5px; padding-left: 2px; margin-right: -2px; }
.step svg { width: 8px; height: 8px; }
.sheets .on { font-weight: 700; background: #e3e3e3; margin-right: -1px; }

.status { display: flex; flex: none; height: 9px; overflow: hidden; white-space: nowrap; color: #444; }
.ready { width: 317px; flex: none; }
.ready span { display: block; width: 270px; margin-left: -6px; border-right: 1px solid #ddd; }
.cells { display: flex; gap: 4px; }
.cells span { border-left: 1px solid #ccc; padding-left: 2px; }
.cells .xyz { border: 0; margin-left: 6px; }
.cells .off { color: #bbb; }
.cells .hot { background: #d5d5d5; border: 0; }
.cells svg { width: 12px; height: 12px; }
.cells i { align-self: flex-start; margin: 5px 0 0 8px; }
```
